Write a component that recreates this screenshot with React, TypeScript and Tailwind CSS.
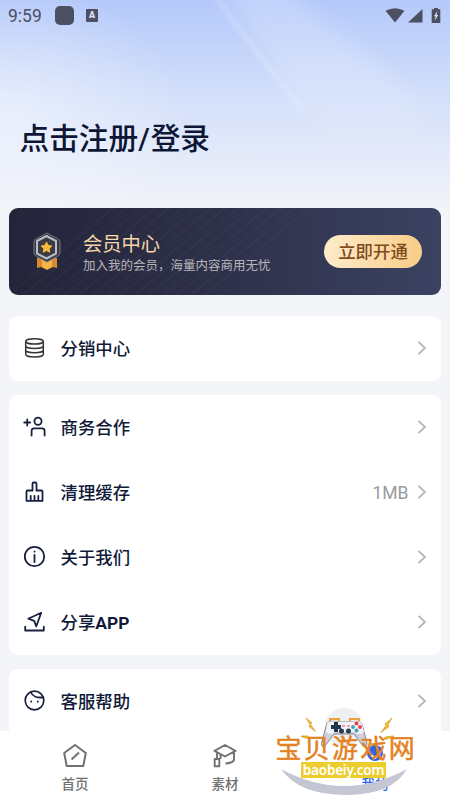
import type { ReactNode } from 'react';

const FONT = "font-['Roboto','Noto_Sans_CJK_SC',sans-serif]";

function Icon({ children, color = '#18213f' }: { children: ReactNode; color?: string }) {
  return (
    <svg width="24" height="24" viewBox="0 0 24 24" fill="none" stroke={color} strokeWidth="1.8" strokeLinecap="round" strokeLinejoin="round" className="shrink-0">
      {children}
    </svg>
  );
}

const coins = (
  <Icon color="#333437">
    <ellipse cx="12.500" cy="5.400" rx="8.800" ry="2.600" strokeWidth="1.500" />
    <path strokeWidth="1.500" d="M3.700 5.400v12.800c0 1.600 3.900 2.800 8.800 2.800s8.800-1.200 8.800-2.800V5.400M3.700 9.700c0 1.600 3.900 2.800 8.800 2.800s8.800-1.200 8.800-2.800M3.700 14c0 1.600 3.900 2.800 8.800 2.800s8.800-1.200 8.800-2.800" />
  </Icon>
);
const addUser = (
  <Icon>
    <path d="M2.200 7.500h6M5.200 4.500v6" />
    <circle cx="16" cy="6.200" r="3.600" />
    <path d="M9.600 20.500v-4.700a2.500 2.500 0 0 1 2.500-2.500h8a2.500 2.500 0 0 1 2.500 2.500v4.700" />
  </Icon>
);
const broom = (
  <Icon>
    <path d="M10.500 10.500V3.800q0-1.300 1.300-1.300h1.400q1.300 0 1.300 1.300v6.700h5q1 0 1 1v9.300H4.500v-9.300q0-1 1-1zM8.700 16v4.800M12.500 16v4.800M16.300 16v4.800" />
  </Icon>
);
const info = (
  <Icon>
    <circle cx="12.500" cy="11.500" r="9.700" />
    <path d="M12.500 10v7M12.500 6.300v.400" />
  </Icon>
);
const share = (
  <Icon>
    <path d="M19.200 2.800 6.200 8.700l6 2.200 2.100 5.400zM3.200 16.700v3.800h18.600v-3.800" />
  </Icon>
);
const face = (
  <Icon>
    <circle cx="12.500" cy="11.500" r="9.300" strokeWidth="1.700" />
    <path d="M8.700 3c1.500 3.600 6 6.200 12.500 5.300M9.200 12.500v.200M15.800 12.500v.200" />
  </Icon>
);

function Row({ icon, label, value }: { icon: ReactNode; label: ReactNode; value?: string }) {
  return (
    <div className="flex h-[65px] items-center pl-[13px] pr-[13px]">
      {icon}
      <span className="ml-[14.500px] grow pt-[2px] text-[17.400px] font-medium leading-6 text-[#111a38]">{label}</span>
      {value && <span className="mr-[7px] pt-px text-[17.500px] leading-6 text-[#999a9e]">{value}</span>}
      <svg width="12" height="16" viewBox="0 0 12 16" fill="none" stroke="#b3b4b8" strokeWidth="1.800">
        <path d="m2.500 1.800 6.500 6.200-6.500 6.200" />
      </svg>
    </div>
  );
}

function StatusBar() {
  return (
    <div className="flex h-[31px] items-center px-[8px] text-[#4b5062]">
      <span className="w-[47px] text-[17.500px] leading-5">9:59</span>
      <span className="size-[19px] rounded-[5px] bg-[#4b5162]" />
      <span className="ml-[12px] flex h-[13px] w-[12px] items-center justify-center rounded-[1px] bg-[#4b5162] text-[9px] font-black leading-none text-[#dbe4fb]">A</span>
      <svg className="ml-auto" width="58" height="18" viewBox="0 0 58 18" fill="#4b5062">
        <path d="M1.500 3.800Q11-1.200 20.500 3.800L11 15.500zM38.500 2v13.500H24z" />
        <path d="M50 1h4v1.300h2.300v13.700h-8.600V2.300h2.300z" />
        <path fill="#dbe4fb" d="m53.500 4-3.500 5.300h1.700l-1.200 4.400 3.800-5.700h-1.800z" />
      </svg>
    </div>
  );
}

function Medal() {
  return (
    <svg width="30" height="40" viewBox="0 0 30 40" className="shrink-0">
      <path d="M5 26h20v10l-4-1-6 3-6-3-4 1z" fill="#d98b2b" />
      <path d="M10 28h10v7l-5 2.500-5-2.500z" fill="#f5b348" />
      <path d="m15 1 11 6q2 1 2 3v11q0 2-2 3l-11 6-11-6q-2-1-2-3V10q0-2 2-3z" fill="#363842" stroke="#747986" />
      <path d="m14.500 4 9.500 5v12.500l-9.500 5-9.500-5V9z" fill="#3a3b44" stroke="#b9bdc7" strokeWidth="2" strokeLinejoin="round" />
      <path d="m14.500 10 1.600 3.400 3.700.6-2.700 2.600.6 3.600-3.200-1.700-3.200 1.700.6-3.600L9.200 14l3.700-.6z" fill="#ffb83f" stroke="#ffb83f" strokeLinejoin="round" />
    </svg>
  );
}

function MemberBanner() {
  return (
    <div className="relative ml-[9px] mr-[9.500px] flex h-[87px] shrink-0 items-center overflow-hidden rounded-[9px] bg-gradient-to-r from-[#24243a] via-[#2e314a] to-[#3b4262] pl-[22.500px] pr-[18.500px]">
      <svg className="absolute inset-0" width="431" height="87" stroke="#ffffff" strokeOpacity=".055" fill="none">
        <path d="M0 87 104 0M14 87 118 0M28 87 132 0M42 87 146 0M56 87 160 0M70 87 174 0M84 87 188 0M98 87 202 0M112 87 216 0M126 87 230 0M140 87 244 0M154 87 258 0M168 87 272 0M182 87 286 0M196 87 300 0" />
      </svg>
      <Medal />
      <div className="relative ml-[21.500px] grow pt-[5px]">
        <div className="text-[19.300px] leading-[24px] text-[#f6d8a8]">会员中心</div>
        <div className="text-[12.500px] leading-[18px] text-[#b8b5b8]">加入我的会员，海量内容商用无忧</div>
      </div>
      <div className="relative flex h-[33px] w-[98px] items-center justify-center rounded-full bg-gradient-to-r from-[#fdebcb] to-[#f9cd86] pt-px text-[17.400px] font-medium text-[#7f4c1d]">立即开通</div>
    </div>
  );
}

function Tab({ label, active, children }: { label: string; active?: boolean; children: ReactNode }) {
  return (
    <div className={`flex w-[150px] flex-col items-center pt-[12px] text-[13.500px] font-medium leading-[20px] ${active ? 'text-[#2f65eb]' : 'text-[#707174]'}`}>
      <svg width="26" height="26" viewBox="0 0 26 26" fill="none" stroke="currentColor" strokeWidth="2" strokeLinejoin="round">
        {children}
      </svg>
      <span className="mt-[5px]">{label}</span>
    </div>
  );
}

function Watermark() {
  return (
    <div className="absolute left-[270px] top-[700px] h-[100px] w-[150px]">
      <svg className="absolute inset-0" width="150" height="100" viewBox="0 0 150 100">
        <path d="M11 69Q74 103 137 69 122 95 76 95 29 95 11 69z" fill="#c5c6d4" />
        <circle cx="74" cy="27" r="19" fill="#f0f0f2" />
        <path d="m36 18 6 5-1.500 1.500 5 7-6.500-5 1-2zM31 36l7 0 2 3-8-2zM122 18l-7 6 1 1.500-5 7 8-6-1-2zM124 36l-9 1-2 3 10-3z" fill="#f4bd26" stroke="#d99c2d" strokeWidth=".8" />
        <path d="M60 21v-2h9v2M80 21v-2h9v2" fill="none" stroke="#eda33b" strokeWidth="2" />
        <path d="M57 23Q60 20 68 22h12q9-2 12 2l5 19q0 5-4 3l-9-12H64l-9 12q-5 2-3-5z" fill="#cfd0dc" stroke="#858796" />
        <path d="M57 23Q60 20 68 22h12q9-2 12 2l2 8q-5 4-10 0H65q-5 4-9 0z" fill="#f2f2f7" />
        <path d="M61 25h3v-3h4v3h3v4h-3v3h-4v-3h-3z" fill="#21364c" />
        <circle cx="71.500" cy="31" r="2.500" fill="#263f50" />
        <circle cx="78.500" cy="31" r="2.500" fill="#263f50" />
        <circle cx="86.500" cy="23.500" r="1.900" fill="#e83c45" />
        <circle cx="86.500" cy="30.500" r="1.900" fill="#3aa3b8" />
        <circle cx="83" cy="27" r="1.900" fill="#3aa3b8" />
        <circle cx="90" cy="27" r="1.900" fill="#e83c45" />
        <path d="M72 26h3M77 26h3" stroke="#ed476b" />
      </svg>
      <div className="absolute left-[5.500px] top-[36px] whitespace-nowrap text-[26px] leading-[26px] tracking-[2.300px] text-[#e38220] [-webkit-text-stroke:.5px_#e38220]">宝贝游戏网</div>
      <div className="absolute left-[31px] top-[62px] flex h-[16px] w-[85px] items-center justify-center bg-[#edcd2d] font-['Noto_Sans',sans-serif] text-[13.500px] font-semibold leading-[16px] tracking-[-.2px] text-white"><span>baobeiy.com</span></div>
    </div>
  );
}

export default function App() {
  return (
    <div className={`relative flex h-[800px] w-[450px] flex-col overflow-hidden bg-[#f4f5f8] ${FONT}`}>
      <header className="relative h-[208px] shrink-0 bg-gradient-to-b from-[#b5c9fa] via-[#d5e1fa] to-[#f1f3f9]">
        <svg className="absolute inset-0" width="450" height="208">
          <defs>
            <linearGradient id="ray" x1="0" y1="0" x2="0" y2="1">
              <stop stopColor="#fff" stopOpacity=".16" />
              <stop offset=".5" stopColor="#fff" stopOpacity=".18" />
              <stop offset="1" stopColor="#fff" stopOpacity="0" />
            </linearGradient>
            <radialGradient id="glow">
              <stop stopColor="#fff" stopOpacity=".45" />
              <stop offset="1" stopColor="#fff" stopOpacity="0" />
            </radialGradient>
            <filter id="soft"><feGaussianBlur stdDeviation="8" /></filter>
            <filter id="softLine"><feGaussianBlur stdDeviation="2" /></filter>
          </defs>
          <ellipse cx="0" cy="115" rx="190" ry="130" fill="url(#glow)" />
          <path d="M224-10h64l130 110 10 60H340z" fill="url(#ray)" filter="url(#soft)" />
          <path d="M215-4q40 55 88 114" stroke="#fff" strokeOpacity=".18" strokeWidth="5" fill="none" filter="url(#softLine)" />
        </svg>
        <div className="relative">
          <StatusBar />
          <h1 className="ml-[19.500px] mt-[88px] text-[29.700px] font-medium leading-[40px] text-[#0d1735]">点击注册<span className="tracking-[.8px]">/</span>登录</h1>
        </div>
      </header>
      <MemberBanner />
      <main className="flex min-h-0 grow flex-col gap-[14px] pl-[9px] pr-[9.500px] pt-[20.500px]">
        <section className="shrink-0 rounded-[9px] bg-white"><Row icon={coins} label="分销中心" /></section>
        <section className="shrink-0 rounded-[9px] bg-white">
          <Row icon={addUser} label="商务合作" />
          <Row icon={broom} label="清理缓存" value="1MB" />
          <Row icon={info} label="关于我们" />
          <Row icon={share} label={<>分享<span className="font-bold">APP</span></>} />
        </section>
        <section className="grow rounded-t-[9px] bg-white"><Row icon={face} label="客服帮助" /></section>
      </main>
      <nav className="flex h-[69px] shrink-0 bg-white">
        <Tab label="首页"><path d="m13 2 10.800 8-2.500 13h-16.600L2.200 10zM9.500 16.500l7.500-7" /></Tab>
        <Tab label="素材"><path strokeWidth="1.900" d="M13 2 2.500 7.800 13 13.500 23.500 7.800zM5 9v7M2.700 16h4.600v7.300H2.700zM8.500 11.500v4.500M22 9v8q-1.500 3-8.500 3.500" /></Tab>
        <Tab label="我的" active><circle cx="13" cy="10" r="7" fill="currentColor" /><path d="m9 12 4 3 5-5" stroke="#fff" /></Tab>
      </nav>
      <Watermark />
    </div>
  );
}
